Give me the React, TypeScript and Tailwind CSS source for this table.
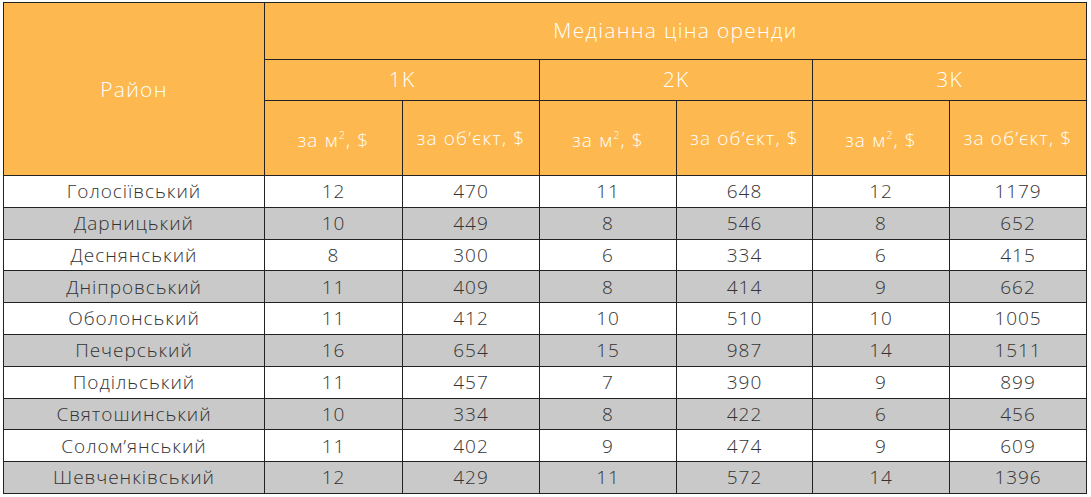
import React from 'react';

const rows: [string, number, number, number, number, number, number][] = [
  ['Голосіївський', 12, 470, 11, 648, 12, 1179],
  ['Дарницький', 10, 449, 8, 546, 8, 652],
  ['Деснянський', 8, 300, 6, 334, 6, 415],
  ['Дніпровський', 11, 409, 8, 414, 9, 662],
  ['Оболонський', 11, 412, 10, 510, 10, 1005],
  ['Печерський', 16, 654, 15, 987, 14, 1511],
  ['Подільський', 11, 457, 7, 390, 9, 899],
  ['Святошинський', 10, 334, 8, 422, 6, 456],
  ['Солом’янський', 11, 402, 9, 474, 9, 609],
  ['Шевченківський', 12, 429, 11, 572, 14, 1396],
];

const th = 'border border-[#222] bg-[#fdb94f] text-white font-light text-center tracking-[0.06em]';
const td = 'border border-[#222] text-center text-[19px] text-[#333] tracking-[0.05em]';

const PerM2 = () => (
  <span>
    за м<sup className="text-[11px] relative -top-[8px]">2</sup>, $
  </span>
);

export default function App() {
  return (
    <div
      className="w-[1091px] h-[497px] bg-white pl-[3px] pt-[2px]"
      style={{ fontFamily: '"Open Sans", "Liberation Sans", sans-serif' }}
    >
      <table className="border-collapse table-fixed w-[1083px] font-light">
        <colgroup>
          <col className="w-[261px]" />
          <col className="w-[138px]" />
          <col className="w-[137px]" />
          <col className="w-[137px]" />
          <col className="w-[136px]" />
          <col className="w-[137px]" />
          <col className="w-[137px]" />
        </colgroup>
        <thead>
          <tr className="h-[57px]">
            <th rowSpan={3} className={`${th} text-[21px] pt-[2px]`}>
              Район
            </th>
            <th colSpan={6} className={`${th} text-[21px]`}>
              Медіанна ціна оренди
            </th>
          </tr>
          <tr className="h-[41px]">
            <th colSpan={2} className={`${th} text-[21px]`}>1K</th>
            <th colSpan={2} className={`${th} text-[21px]`}>2K</th>
            <th colSpan={2} className={`${th} text-[21px]`}>3K</th>
          </tr>
          <tr className="h-[75px]">
            {[0, 1, 2].map((i) => (
              <React.Fragment key={i}>
                <th className={`${th} text-[19px] pt-[4px] whitespace-nowrap`}>
                  <PerM2 />
                </th>
                <th className={`${th} text-[19px] whitespace-nowrap tracking-[0.04em]`}>за об’єкт, $</th>
              </React.Fragment>
            ))}
          </tr>
        </thead>
        <tbody>
          {rows.map((r, i) => (
            <tr key={r[0]} className={`h-[31.8px] ${i % 2 ? 'bg-[#c9c9c9]' : 'bg-white'}`}>
              {r.map((c, j) => (
                <td key={j} className={td}>
                  {c}
                </td>
              ))}
            </tr>
          ))}
        </tbody>
      </table>
    </div>
  );
}
